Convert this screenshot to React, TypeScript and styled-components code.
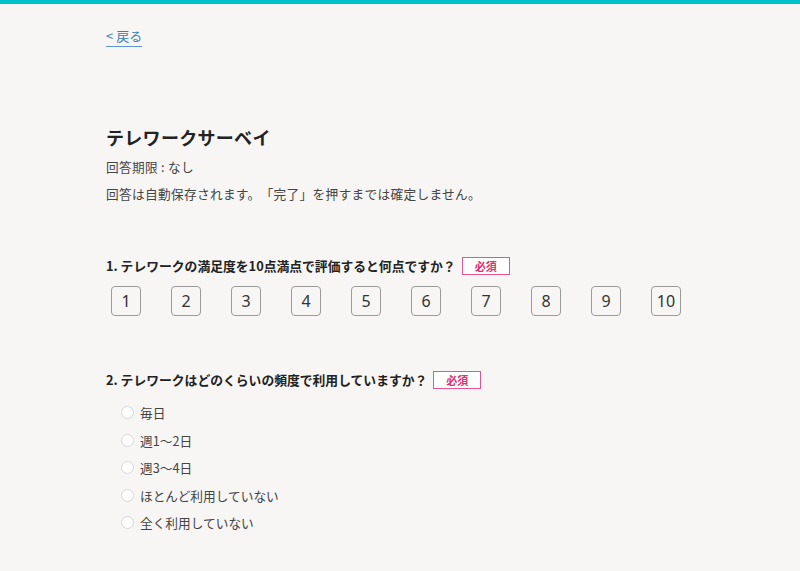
import { createGlobalStyle } from "styled-components";
import styled from "styled-components";

const GlobalStyle = createGlobalStyle`
  html, body {
    margin: 0;
    padding: 0;
    background: #f7f6f5;
  }
  body {
    font-family: "Noto Sans CJK JP", "Noto Sans", sans-serif;
    color: #333;
    text-spacing-trim: space-all;
  }
`;

const SCORES = [1, 2, 3, 4, 5, 6, 7, 8, 9, 10];
const FREQUENCY = ["毎日", "週1〜2日", "週3〜4日", "ほとんど利用していない", "全く利用していない"];

const App = () => {
  return (
    <>
      <GlobalStyle />
      <TopBar />
      <Page>
        <BackLink href="#">&lt; 戻る</BackLink>
        <Title>テレワークサーベイ</Title>
        <Meta>回答期限 : なし</Meta>
        <Note>回答は自動保存されます。「完了」を押すまでは確定しません。</Note>

        <Question $gap={52}>
          <QuestionText>1. テレワークの満足度を10点満点で評価すると何点ですか？</QuestionText>
          <Required>必須</Required>
        </Question>
        <ScoreRow>
          {SCORES.map((n) => (
            <ScoreButton key={n} type="button">
              {n}
            </ScoreButton>
          ))}
        </ScoreRow>

        <Question $gap={54}>
          <QuestionText>2. テレワークはどのくらいの頻度で利用していますか？</QuestionText>
          <Required>必須</Required>
        </Question>
        <Options>
          {FREQUENCY.map((label) => (
            <Option key={label}>
              <Radio type="radio" name="frequency" />
              <span>{label}</span>
            </Option>
          ))}
        </Options>
      </Page>
    </>
  );
};

const TopBar = styled.div`
  height: 4px;
  background: #00c2cb;
`;
const Page = styled.main`
  padding: 0 106px 40px;
  display: flex;
  flex-direction: column;
  align-items: flex-start;
`;
const BackLink = styled.a`
  margin-top: 23px;
  display: inline-block;
  font-size: 13px;
  line-height: 18px;
  padding-bottom: 1px;
  color: #3a7fc1;
  text-decoration: none;
  border-bottom: 1px solid #5d97cc;
`;
const Title = styled.h1`
  margin: 77px 0 0;
  font-size: 18px;
  line-height: 26px;
  font-weight: 700;
  letter-spacing: 0.3px;
  color: #222;
`;
const Meta = styled.p`
  margin: 7px 0 0;
  font-size: 12.7px;
  line-height: 20px;
  letter-spacing: 0.3px;
  color: #444;
`;
const Note = styled(Meta)``;
const Question = styled.div<{ $gap: number }>`
  margin-top: ${(p) => p.$gap}px;
  display: flex;
  align-items: center;
  gap: 6px;
  height: 20px;
`;
const QuestionText = styled.h2`
  margin: 0;
  font-size: 12.8px;
  line-height: 20px;
  font-weight: 700;
  color: #222;
`;
const Required = styled.span`
  box-sizing: border-box;
  width: 48px;
  height: 18px;
  display: inline-flex;
  align-items: center;
  justify-content: center;
  border: 1px solid #e8558e;
  background: #fff;
  color: #e0306f;
  font-size: 11px;
  font-weight: 700;
`;
const ScoreRow = styled.div`
  margin: 10px 0 0 5px;
  display: flex;
  gap: 30px;
`;
const ScoreButton = styled.button`
  box-sizing: border-box;
  width: 30px;
  height: 30px;
  padding: 0;
  display: flex;
  align-items: center;
  justify-content: center;
  background: transparent;
  border: 1px solid #9a9a9a;
  border-radius: 4px;
  font-family: "Noto Sans", sans-serif;
  font-size: 16px;
  color: #333;
  cursor: pointer;
`;
const Options = styled.div`
  margin-top: 9px;
  display: flex;
  flex-direction: column;
`;
const Option = styled.label`
  height: 27.5px;
  display: flex;
  align-items: center;
  gap: 6px;
  padding-left: 15px;
  font-size: 12.7px;
  color: #444;
  cursor: pointer;
`;
const Radio = styled.input`
  appearance: none;
  margin: 0;
  width: 13px;
  height: 13px;
  border-radius: 50%;
  background: #fff;
  border: 1px solid #d6d6d6;
  &:checked {
    border: 4px solid #00c2cb;
  }
`;

export default App;
